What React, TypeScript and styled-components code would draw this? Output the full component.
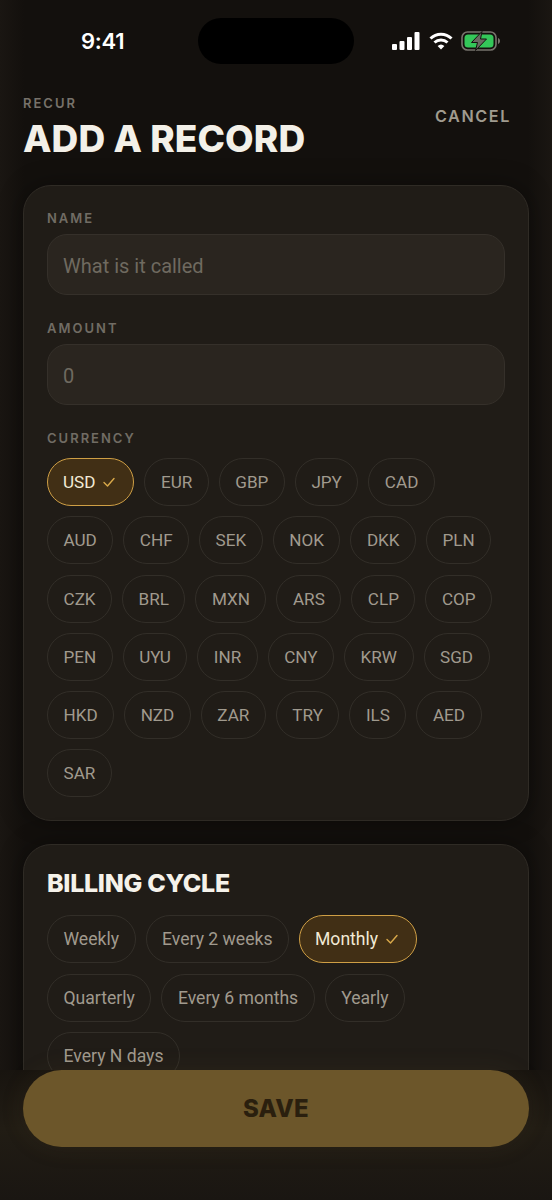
import React from "react";
import styled, { createGlobalStyle } from "styled-components";

const Global = createGlobalStyle`
  html, body { margin: 0; padding: 0; background: #14110e; }
  * { box-sizing: border-box; }
`;
const Page = styled.div`
  position: relative; width: 552px; height: 1200px; overflow: hidden;
  background: linear-gradient(90deg, #1a1612 0, #13100d 24px, #13100d 528px, #1a1612 100%);
  font-family: Roboto, sans-serif; color: #f2efe8;
`;
const StatusBar = styled.div`
  height: 96px; padding: 18px 0 0 81px; display: flex; align-items: flex-start;
`;
const Time = styled.div`
  font-family: Inter, sans-serif; font-size: 22px; font-weight: 600; line-height: 46px; width: 117px; letter-spacing: -0.3px; color: #fff;
`;
const Island = styled.div` width: 156px; height: 46px; border-radius: 23px; background: #000; `;
const Indicators = styled.div` height: 46px; display: flex; align-items: center; gap: 8.500px; margin-left: 38px; `;
const Header = styled.header`
  display: flex; justify-content: space-between; align-items: flex-start; padding: 0 41px 0 23px; height: 89px;
`;
const Eyebrow = styled.div`
  font-family: Inter, sans-serif; font-size: 13px; font-weight: 600; letter-spacing: 2px; line-height: 16px; margin-top: -1px; color: #77726a;
`;
const Title = styled.h1`
  margin: 6px 0 0; font-family: Inter, sans-serif; font-size: 37px; line-height: 44px; font-weight: 800; letter-spacing: 0.1px; color: #f3f0e8;
`;
const Cancel = styled.div`
  font-family: Inter, sans-serif; font-size: 16.2px; font-weight: 600; letter-spacing: 1.6px; line-height: 22px; margin-top: 9px; color: #a09b8f;
`;
const Stack = styled.div` display: flex; flex-direction: column; gap: 23px; padding: 0 23px; `;
const Card = styled.section`
  padding: 23px 23px 23px; border-radius: 28px; background: #201c17; border: 1px solid #2f2b25;
  box-shadow: 0 0 24px rgba(0,0,0,0.35);
`;
const Label = styled.div`
  font-family: Inter, sans-serif; font-size: 13px; font-weight: 600; letter-spacing: 2px; line-height: 18px; color: #716c64; margin-bottom: 7px;
`;
const Field = styled.div`
  height: 61px; margin-bottom: 24px; padding: 3px 15px 0; display: flex; align-items: center;
  border-radius: 20px; background: #2a251f; border: 1px solid #35302a; font-size: 20px; color: #6f6a60;
`;
const Chips = styled.div<{ $offset?: boolean }>`
  display: flex; flex-wrap: wrap; gap: 10.3px 10px; margin-top: ${p => (p.$offset ? "11px" : "0")};
`;
const Chip = styled.div<{ $on?: boolean; $caps?: boolean }>`
  height: 48px; padding: ${p => (p.$on ? "0 17px 0 15px" : "0 15.5px")}; display: inline-flex; align-items: center; gap: 7px; border-radius: 24px;
  font-size: ${p => (p.$caps ? "17.1px" : "17.6px")}; white-space: nowrap;
  color: ${p => (p.$on ? "#f2ead6" : "#a09a8e")};
  background: ${p => (p.$on ? "#412f15" : "transparent")};
  border: ${p => (p.$on ? "1.6px solid #cf9f45" : "1px solid #322e28")};
`;
const CardTitle = styled.h2`
  margin: 0 0 17px; font-family: Inter, sans-serif; font-size: 25px; line-height: 30px; font-weight: 800; letter-spacing: -0.3px; color: #f5f2ea;
`;
const Footer = styled.div`
  position: absolute; left: 0; right: 0; top: 1070px; bottom: 0; padding: 0 23px;
  background: linear-gradient(180deg, #18140f 0, #211c14 45%, #1a1612 100%);
`;
const Save = styled.div`
  height: 77px; border-radius: 39px; background: #6c562a; display: flex; align-items: center; justify-content: center;
  font-family: Inter, sans-serif; font-size: 24px; font-weight: 800; letter-spacing: 0.3px; color: #2a1f0e;
  box-shadow: 0 0 24px rgba(108,86,42,0.14);
`;

const Check = () => (
  <svg width="14" height="14" viewBox="0 0 14 14" fill="none" stroke="#d9a94a" strokeWidth="1.4" strokeLinecap="round" strokeLinejoin="round">
    <path d="M2 7.5 5.5 11 12 3.5" />
  </svg>
);
const Signal = () => (
  <svg width="28" height="18" viewBox="0 0 28 18" fill="#fff">
    <rect x="0" y="12" width="5" height="6" rx="1" /><rect x="7.5" y="9" width="5" height="9" rx="1" />
    <rect x="15" y="5" width="5" height="13" rx="1" /><rect x="22.5" y="0" width="5" height="18" rx="1" />
  </svg>
);
const Wifi = () => (
  <svg width="24" height="18" viewBox="0 0 24 18" fill="none" stroke="#fff" strokeWidth="3">
    <path d="M1.500 6.500a15 15 0 0 1 21 0" /><path d="M5.500 10.500a9.500 9.500 0 0 1 13 0" />
    <path d="M12 17.500 8.600 14a5 5 0 0 1 6.800 0z" fill="#fff" stroke="none" />
  </svg>
);
const Battery = () => (
  <svg width="40" height="20" viewBox="0 0 40 20" fill="none">
    <rect x="1" y="1" width="34" height="18" rx="5.500" stroke="#77736c" strokeWidth="1.600" />
    <rect x="3.500" y="3.500" width="29" height="13" rx="3.500" fill="#34c759" />
    <path d="M37 7v6c1.400-.5 2-1.600 2-3s-.6-2.500-2-3z" fill="#77736c" />
    <path d="M21 0.500 10.500 11.500h6l-2 8 11-11.500h-6z" fill="#6a6a62" stroke="#14110e" strokeWidth="1" />
  </svg>
);

const currencies = ["EUR","GBP","JPY","CAD","AUD","CHF","SEK","NOK","DKK","PLN","CZK","BRL","MXN","ARS","CLP","COP","PEN","UYU","INR","CNY","KRW","SGD","HKD","NZD","ZAR","TRY","ILS","AED","SAR"];
const cycles = ["Quarterly","Every 6 months","Yearly","Every N days"];

export default function App() {
  return (
    <Page>
      <Global />
      <StatusBar>
        <Time>9:41</Time>
        <Island />
        <Indicators><Signal /><Wifi /><Battery /></Indicators>
      </StatusBar>
      <Header>
        <div>
          <Eyebrow>RECUR</Eyebrow>
          <Title>ADD A RECORD</Title>
        </div>
        <Cancel>CANCEL</Cancel>
      </Header>
      <Stack>
        <Card>
          <Label>NAME</Label>
          <Field>What is it called</Field>
          <Label>AMOUNT</Label>
          <Field>0</Field>
          <Label>CURRENCY</Label>
          <Chips $offset>
            <Chip $on $caps>USD <Check /></Chip>
            {currencies.map(c => <Chip $caps key={c}>{c}</Chip>)}
          </Chips>
        </Card>
        <Card>
          <CardTitle>BILLING CYCLE</CardTitle>
          <Chips>
            <Chip>Weekly</Chip>
            <Chip>Every 2 weeks</Chip>
            <Chip $on>Monthly <Check /></Chip>
            {cycles.map(c => <Chip key={c}>{c}</Chip>)}
          </Chips>
        </Card>
      </Stack>
      <Footer><Save>SAVE</Save></Footer>
    </Page>
  );
}
